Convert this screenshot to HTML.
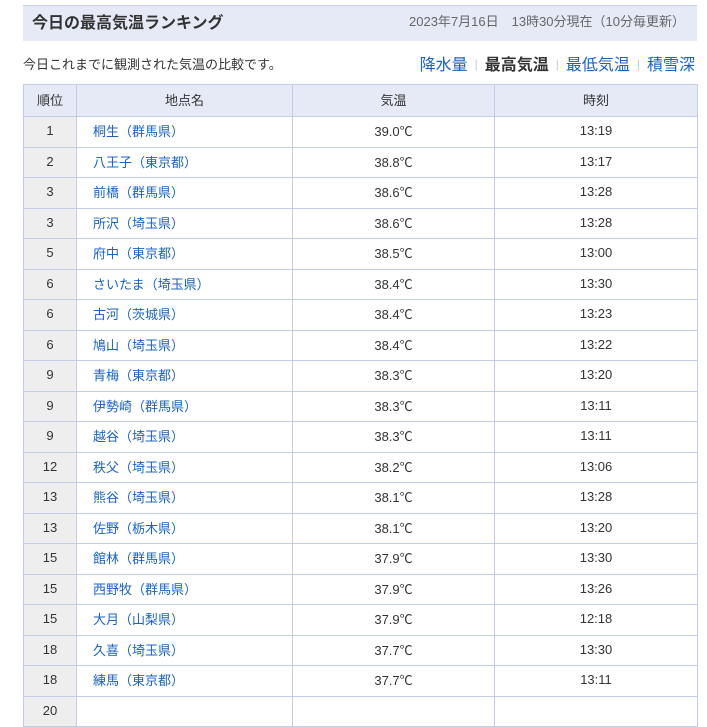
<!DOCTYPE html>
<html><head><meta charset="utf-8"><style>
body{margin:0;background:#fff;font-family:"Liberation Sans","Noto Sans CJK JP",sans-serif;color:#333;}
.hd{position:absolute;left:23px;top:5px;width:674px;height:36px;background:#e5eaf6;border-top:1px solid #c8d2ea;box-sizing:border-box;}
.hd .t{position:absolute;left:9px;top:3px;font-size:16px;font-weight:bold;color:#333;}
.hd .d{position:absolute;right:12px;top:5px;font-size:13px;color:#666;}
.sub{position:absolute;left:23px;top:54px;font-size:13px;color:#333;}
.nav{position:absolute;right:12px;top:51px;font-size:16px;}
.nav a{color:#1a63c6;text-decoration:none}
.nav b{color:#333}
.nav i{font-style:normal;color:#ccc;font-size:12px;margin:0 7px;position:relative;top:-2px}
table{position:absolute;left:23px;top:84px;border-collapse:collapse;width:675px;font-size:13px;}
td,th{border:1px solid #c3cde6;text-align:center;padding:0 0 2px 0;height:27.5px;}
th{background:#e5eaf6;font-weight:normal;height:29px;color:#333}
td.r{background:#eee;width:52px}
td.n{text-align:left;padding-left:16px;color:#1a63c6;width:199px}
td.v{width:201px}
</style></head><body>
<div class="hd"><div class="t">今日の最高気温ランキング</div><div class="d">2023年7月16日　13時30分現在（10分毎更新）</div></div>
<div class="sub">今日これまでに観測された気温の比較です。</div>
<div class="nav"><a>降水量</a><i>|</i><b>最高気温</b><i>|</i><a>最低気温</a><i>|</i><a>積雪深</a></div>
<table>
<tr><th>順位</th><th>地点名</th><th>気温</th><th>時刻</th></tr>
<tr><td class="r">1</td><td class="n">桐生（群馬県）</td><td class="v">39.0℃</td><td>13:19</td></tr>
<tr><td class="r">2</td><td class="n">八王子（東京都）</td><td class="v">38.8℃</td><td>13:17</td></tr>
<tr><td class="r">3</td><td class="n">前橋（群馬県）</td><td class="v">38.6℃</td><td>13:28</td></tr>
<tr><td class="r">3</td><td class="n">所沢（埼玉県）</td><td class="v">38.6℃</td><td>13:28</td></tr>
<tr><td class="r">5</td><td class="n">府中（東京都）</td><td class="v">38.5℃</td><td>13:00</td></tr>
<tr><td class="r">6</td><td class="n">さいたま（埼玉県）</td><td class="v">38.4℃</td><td>13:30</td></tr>
<tr><td class="r">6</td><td class="n">古河（茨城県）</td><td class="v">38.4℃</td><td>13:23</td></tr>
<tr><td class="r">6</td><td class="n">鳩山（埼玉県）</td><td class="v">38.4℃</td><td>13:22</td></tr>
<tr><td class="r">9</td><td class="n">青梅（東京都）</td><td class="v">38.3℃</td><td>13:20</td></tr>
<tr><td class="r">9</td><td class="n">伊勢崎（群馬県）</td><td class="v">38.3℃</td><td>13:11</td></tr>
<tr><td class="r">9</td><td class="n">越谷（埼玉県）</td><td class="v">38.3℃</td><td>13:11</td></tr>
<tr><td class="r">12</td><td class="n">秩父（埼玉県）</td><td class="v">38.2℃</td><td>13:06</td></tr>
<tr><td class="r">13</td><td class="n">熊谷（埼玉県）</td><td class="v">38.1℃</td><td>13:28</td></tr>
<tr><td class="r">13</td><td class="n">佐野（栃木県）</td><td class="v">38.1℃</td><td>13:20</td></tr>
<tr><td class="r">15</td><td class="n">館林（群馬県）</td><td class="v">37.9℃</td><td>13:30</td></tr>
<tr><td class="r">15</td><td class="n">西野牧（群馬県）</td><td class="v">37.9℃</td><td>13:26</td></tr>
<tr><td class="r">15</td><td class="n">大月（山梨県）</td><td class="v">37.9℃</td><td>12:18</td></tr>
<tr><td class="r">18</td><td class="n">久喜（埼玉県）</td><td class="v">37.7℃</td><td>13:30</td></tr>
<tr><td class="r">18</td><td class="n">練馬（東京都）</td><td class="v">37.7℃</td><td>13:11</td></tr>
<tr><td class="r">20</td><td class="n">&nbsp;</td><td class="v">&nbsp;</td><td>&nbsp;</td></tr>
</table>
</body></html>
